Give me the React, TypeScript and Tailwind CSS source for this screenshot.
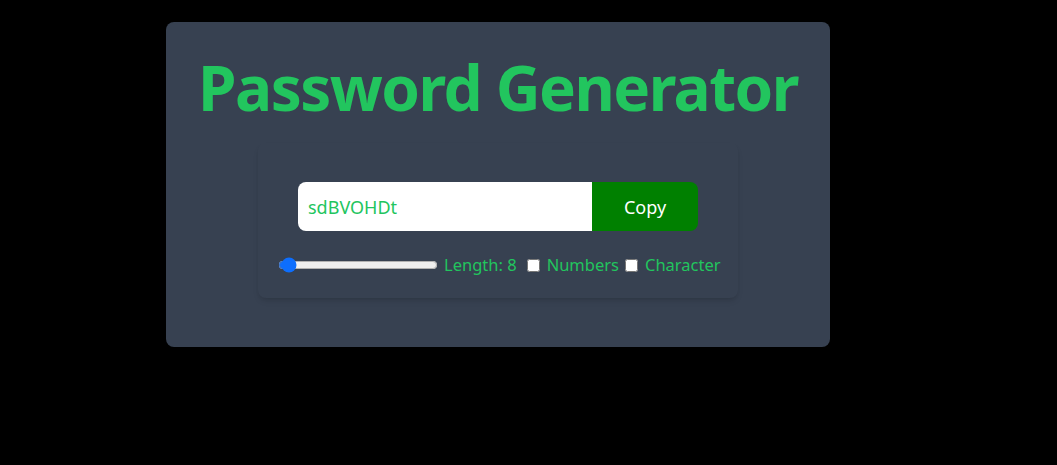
import React, { useState } from 'react';

function App() {
  const [length, setLength] = useState(8);
  const [numbers, setNumbers] = useState(false);
  const [chars, setChars] = useState(false);
  const password = 'sdBVOHDt';

  return (
    <div className="min-h-screen bg-black pt-[22px] font-['Noto_Sans','Open_Sans',sans-serif]">
      <div className="w-[664px] ml-[166px] h-[325px] bg-[#374151] rounded-lg pt-[29px]">
        {/* Title */}
        <h1 className="text-center whitespace-nowrap text-[62px] leading-[72px] tracking-[-0.025em] font-bold text-[#22c55e]">
          Password Generator
        </h1>

        {/* Generator card */}
        <div className="w-[480px] mx-auto mt-[20px] rounded-lg shadow-md px-5 pt-[39px] pb-[21px]">
          <div className="flex mx-5 rounded-lg overflow-hidden mb-[22px]">
            <input
              type="text"
              value={password}
              readOnly
              className="flex-1 min-w-0 h-[49px] bg-white px-[10px] text-lg text-[#22c55e] outline-none"
            />
            <button className="w-[106px] bg-[#008000] text-white text-lg">Copy</button>
          </div>

          <div className="flex items-center whitespace-nowrap text-[16.5px] text-[#22c55e] h-6">
            <input
              type="range"
              min={6}
              max={100}
              value={length}
              onChange={e => setLength(Number(e.target.value))}
              className="w-40 shrink-0 cursor-pointer accent-[#0d6efd]"
            />
            <label className="ml-[6px]">Length: {length}</label>
            <input
              type="checkbox"
              checked={numbers}
              onChange={() => setNumbers(p => !p)}
              className="ml-[10px] w-[13px] h-[13px] shrink-0"
            />
            <label className="ml-[7px]">Numbers</label>
            <input
              type="checkbox"
              checked={chars}
              onChange={() => setChars(p => !p)}
              className="ml-[6px] w-[13px] h-[13px] shrink-0"
            />
            <label className="ml-[7px]">Character</label>
          </div>
        </div>
      </div>
    </div>
  );
}

export default App;
